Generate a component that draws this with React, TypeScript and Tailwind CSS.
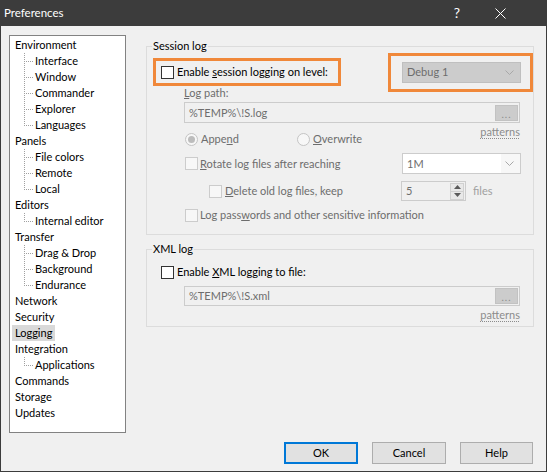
import React from "react";

type Node = { label: string; children?: string[] };

const tree: Node[] = [
  { label: "Environment", children: ["Interface", "Window", "Commander", "Explorer", "Languages"] },
  { label: "Panels", children: ["File colors", "Remote", "Local"] },
  { label: "Editors", children: ["Internal editor"] },
  { label: "Transfer", children: ["Drag & Drop", "Background", "Endurance"] },
  { label: "Network" },
  { label: "Security" },
  { label: "Logging" },
  { label: "Integration", children: ["Applications"] },
  { label: "Commands" },
  { label: "Storage" },
  { label: "Updates" },
];

function Conn({ last }: { last: boolean }) {
  return (
    <svg width="22" height="16" className="shrink-0" shapeRendering="crispEdges">
      <line x1="11.5" y1="0" x2="11.5" y2={last ? 9 : 16} stroke="#a0a0a0" strokeDasharray="1 1" />
      <line x1="13" y1="8.5" x2="21" y2="8.5" stroke="#a0a0a0" strokeDasharray="1 1" />
    </svg>
  );
}

function Check({ disabled }: { disabled?: boolean }) {
  return (
    <span
      className={
        disabled
          ? "inline-block w-[13px] h-[13px] shrink-0 border border-[#cccccc] bg-[#f7f7f7]"
          : "inline-block w-[13px] h-[13px] shrink-0 border border-[#333333] bg-white"
      }
    />
  );
}

function Radio({ checked }: { checked?: boolean }) {
  return (
    <span className="w-[13px] h-[13px] shrink-0 rounded-full border border-[#c4c4c4] bg-[#f7f7f7] flex items-center justify-center">
      {checked && <span className="w-[7px] h-[7px] rounded-full bg-[#bcbcbc]" />}
    </span>
  );
}

function Chevron() {
  return (
    <svg width="9" height="5" viewBox="0 0 9 5" className="shrink-0">
      <polyline points="0.5,0.5 4.5,4.5 8.5,0.5" fill="none" stroke="#a8a8a8" strokeWidth="1" />
    </svg>
  );
}

function Dots() {
  return (
    <span className="w-[23px] h-[16px] bg-[#cccccc] border border-[#c2c2c2] flex items-end justify-center text-[#8a8a8a] text-[10px] leading-[12px] tracking-[1px]">
      ...
    </span>
  );
}

function Group({ title, className, children }: { title: string; className: string; children: React.ReactNode }) {
  return (
    <div className={className}>
      <span className="absolute left-[5px] top-[-9px] px-[1px] bg-[#f0f0f0] leading-[16px] text-black">{title}</span>
      {children}
    </div>
  );
}

export default function App() {
  return (
    <div className="w-[547px] h-[472px] bg-[#f0f0f0] border-x border-b border-[#3c3c3c] flex flex-col font-['Lato',sans-serif] text-[11px] text-black overflow-hidden">
      {/* Title bar */}
      <div className="h-[26px] shrink-0 bg-[#3c3c3c] flex items-center text-white pl-[3px] pr-[24px]">
        <span className="leading-[16px] text-[11.5px]">Preferences</span>
        <span className="ml-auto w-[42px] flex justify-center text-[14px] leading-[16px]">?</span>
        <span className="w-[44px] flex justify-center">
          <svg width="11" height="11" viewBox="0 0 11 11">
            <line x1="0.5" y1="0.5" x2="10.5" y2="10.5" stroke="white" strokeWidth="1" />
            <line x1="10.5" y1="0.5" x2="0.5" y2="10.5" stroke="white" strokeWidth="1" />
          </svg>
        </span>
      </div>

      {/* Content */}
      <div className="flex pt-[9px]">
        {/* Tree */}
        <div className="ml-[8px] w-[117px] h-[398px] bg-white border border-[#828282] pt-[1px] flex flex-col">
          {tree.map((n) => (
            <React.Fragment key={n.label}>
              <div className="h-[16px] pl-[2px] flex items-center">
                <span
                  className={
                    n.label === "Logging"
                      ? "px-[3px] h-[16px] leading-[16px] bg-[#d9d9d9]"
                      : "px-[3px] h-[16px] leading-[16px]"
                  }
                >
                  {n.label}
                </span>
              </div>
              {n.children?.map((c, i) => (
                <div key={c} className="h-[16px] pl-[3px] flex items-center">
                  <Conn last={i === n.children!.length - 1} />
                  <span className="leading-[16px]">{c}</span>
                </div>
              ))}
            </React.Fragment>
          ))}
        </div>

        {/* Right panel */}
        <div className="ml-[20px] w-[388px] flex flex-col pt-[11px]">
          <Group title="Session log" className="relative h-[189px] border border-[#dcdcdc] flex flex-col">
            {/* Row A */}
            <div className="mt-[14px] h-[22px] flex items-center pl-[14px] pr-[12px]">
              <span className="flex items-center gap-[3px]">
                <Check />
                <span className="leading-[16px]">
                  Enable <u>s</u>ession logging on level:
                </span>
              </span>
              <div className="ml-auto w-[119px] h-[21px] bg-[#cccccc] border border-[#bfbfbf] flex items-center pl-[4px] pr-[6px] text-[#6d6d6d]">
                <span className="leading-[16px]">Debug 1</span>
                <span className="ml-auto">
                  <Chevron />
                </span>
              </div>
            </div>
            {/* Log path */}
            <div className="mt-[2px] h-[16px] pl-[37px] leading-[16px] text-[#6d6d6d]">
              <u>L</u>og path:
            </div>
            <div className="mt-[1px] ml-[37px] mr-[13px] h-[21px] border border-[#cccccc] bg-[#f0f0f0] flex items-center pl-[4px] pr-[1px] text-[#6d6d6d]">
              <span className="leading-[16px]">%TEMP%\!S.log</span>
              <span className="ml-auto">
                <Dots />
              </span>
            </div>
            {/* Radios + patterns */}
            <div className="h-[24px] flex pl-[38px] pr-[13px]">
              <div className="mt-[8px] h-[16px] flex items-center text-[#6d6d6d]">
                <span className="w-[112px] flex items-center gap-[3px]">
                  <Radio checked />
                  <span className="leading-[16px]">
                    Appe<u>n</u>d
                  </span>
                </span>
                <span className="flex items-center gap-[3px]">
                  <Radio />
                  <span className="leading-[16px]">
                    <u>O</u>verwrite
                  </span>
                </span>
              </div>
              <span className="ml-auto mt-[1px] h-[16px] leading-[16px] text-[#8c8c8c] underline decoration-dotted underline-offset-[2px]">
                patterns
              </span>
            </div>
            {/* Rotate */}
            <div className="mt-[6px] h-[21px] flex items-center pl-[38px] pr-[12px] text-[#6d6d6d]">
              <span className="flex items-center gap-[2px]">
                <Check disabled />
                <span className="leading-[16px]">
                  <u>R</u>otate log files after reaching
                </span>
              </span>
              <div className="ml-auto w-[119px] h-[21px] border border-[#cccccc] bg-[#f7f7f7] flex items-center">
                <span className="w-[98px] h-[19px] bg-white pl-[4px] leading-[19px] text-[#6d6d6d]">1M</span>
                <span className="ml-auto mr-[6px]">
                  <Chevron />
                </span>
              </div>
            </div>
            {/* Delete */}
            <div className="mt-[7px] h-[20px] flex items-center pl-[62px] text-[#6d6d6d]">
              <span className="w-[192px] flex items-center gap-[3px]">
                <Check disabled />
                <span className="leading-[16px]">
                  <u>D</u>elete old log files, keep
                </span>
              </span>
              <div className="w-[65px] h-[20px] border border-[#cccccc] bg-[#f0f0f0] flex items-center pl-[4px] pr-[1px]">
                <span className="leading-[16px]">5</span>
                <div className="ml-auto w-[14px] h-[17px] flex flex-col border border-[#d0d0d0] bg-[#e8e8e8]">
                  <span className="flex-1 flex items-center justify-center border-b border-[#d0d0d0]">
                    <svg width="7" height="4" viewBox="0 0 7 4">
                      <polygon points="0,4 3.5,0 7,4" fill="#5a5a5a" />
                    </svg>
                  </span>
                  <span className="flex-1 flex items-center justify-center">
                    <svg width="7" height="4" viewBox="0 0 7 4">
                      <polygon points="0,0 7,0 3.5,4" fill="#5a5a5a" />
                    </svg>
                  </span>
                </div>
              </div>
              <span className="ml-[7px] leading-[16px] text-[#a0a0a0]">files</span>
            </div>
            {/* Passwords */}
            <div className="mt-[6px] h-[16px] flex items-center pl-[38px] text-[#6d6d6d]">
              <span className="flex items-center gap-[2px]">
                <Check disabled />
                <span className="leading-[16px]">
                  Log pass<u>w</u>ords and other sensitive information
                </span>
              </span>
            </div>

            {/* Orange annotation boxes */}
            <div className="absolute left-[6px] top-[11px] w-[188px] h-[28px] border-[3px] border-[#f0883a]" />
            <div className="absolute left-[241px] top-[6px] w-[145px] h-[39px] border-[3px] border-[#f0883a]" />
          </Group>

          <Group title="XML log" className="relative mt-[14px] h-[78px] border border-[#dcdcdc] flex flex-col">
            <div className="mt-[14px] h-[16px] flex items-center pl-[14px]">
              <span className="flex items-center gap-[3px]">
                <Check />
                <span className="leading-[16px]">
                  Enable <u>X</u>ML logging to file:
                </span>
              </span>
            </div>
            <div className="mt-[6px] ml-[37px] mr-[13px] h-[20px] border border-[#cccccc] bg-[#f0f0f0] flex items-center pl-[4px] pr-[1px] text-[#6d6d6d]">
              <span className="leading-[16px]">%TEMP%\!S.xml</span>
              <span className="ml-auto">
                <Dots />
              </span>
            </div>
            <div className="mt-[1px] h-[16px] flex pr-[13px]">
              <span className="ml-auto h-[16px] leading-[16px] text-[#8c8c8c] underline decoration-dotted underline-offset-[2px]">
                patterns
              </span>
            </div>
          </Group>
        </div>
      </div>

      {/* Buttons */}
      <div className="mt-[9px] flex justify-end gap-[14px] pr-[13px]">
        <button className="w-[74px] h-[22px] bg-[#e1e1e1] border-2 border-[#0078d7] leading-[16px]">OK</button>
        <button className="w-[74px] h-[22px] bg-[#e1e1e1] border border-[#adadad] leading-[16px]">Cancel</button>
        <button className="w-[73px] h-[22px] bg-[#e1e1e1] border border-[#adadad] leading-[16px]">Help</button>
      </div>
    </div>
  );
}
